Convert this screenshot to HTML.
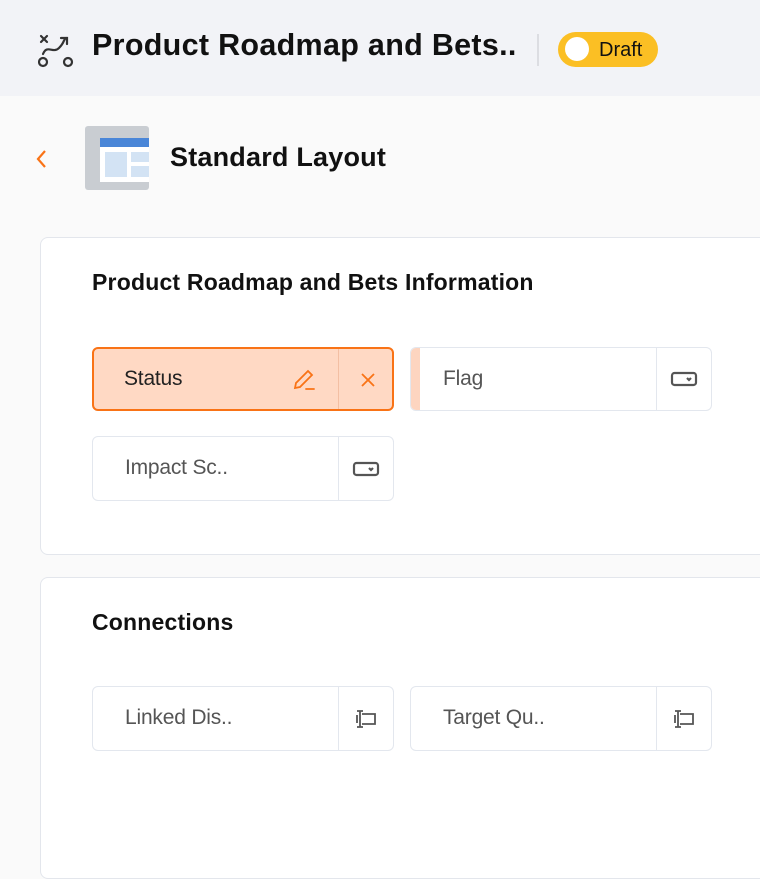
<!DOCTYPE html><html><head><style>
body{margin:0;width:760px;height:788px;overflow:hidden;background:#fafafa;font-family:"Liberation Sans",sans-serif;position:relative}
.hdr{position:absolute;left:0;top:0;width:760px;height:96px;background:#f2f3f7}
.abs{position:absolute}
.card{position:absolute;left:40px;width:740px;background:#fff;border:1px solid #e3e6ec;border-radius:8px}
.f{position:absolute;width:302px;height:64px;border:1px solid #e3e7ee;border-radius:6px;background:#fff;box-sizing:border-box;overflow:hidden}
.f .t{position:absolute;left:32px;top:0;line-height:61px;font-size:21px;color:#555;letter-spacing:-0.2px}
.f .d{position:absolute;left:245px;top:0;width:1px;height:100%;background:#e3e7ee}
.f .i{position:absolute;left:246px;top:0;width:54px;height:100%;display:flex;align-items:center;justify-content:center}
</style></head><body>
<div class="hdr"></div>
<svg class="abs" style="left:38px;top:34px" width="36" height="36" viewBox="0 0 36 36" fill="none" stroke="#333" stroke-width="2.2" stroke-linecap="round"><path d="M3 2l6 6M9 2l-6 6"/><path d="M5 20c4-10 10 0 16-6s4-8 7-10"/><path d="M23 4h6v6"/><circle cx="5" cy="28" r="4"/><circle cx="30" cy="28" r="4"/></svg>
<div class="abs" style="left:92px;top:28px;font-size:30.5px;font-weight:bold;color:#111;letter-spacing:0.3px">Product Roadmap and Bets..</div>
<div class="abs" style="left:537px;top:34px;width:2px;height:32px;background:#dcdde2"></div>
<div class="abs" style="left:558px;top:32px;width:100px;height:35px;border-radius:18px;background:#fbbf24"></div>
<div class="abs" style="left:565px;top:37px;width:24px;height:24px;border-radius:50%;background:#fff"></div>
<div class="abs" style="left:599px;top:38px;font-size:20px;color:#111;line-height:24px">Draft</div>
<svg class="abs" style="left:34px;top:149px" width="14" height="20" viewBox="0 0 14 20" fill="none" stroke="#f97316" stroke-width="2.2"><path d="M11 2L4 10l7 8"/></svg>
<div class="abs" style="left:85px;top:126px;width:64px;height:64px;background:#c9cdd2;border-radius:3px"></div>
<div class="abs" style="left:100px;top:138px;width:49px;height:44px;background:#fff"></div>
<div class="abs" style="left:100px;top:138px;width:49px;height:9px;background:#4a86d8"></div>
<div class="abs" style="left:105px;top:152px;width:22px;height:25px;background:#d3e3f4"></div>
<div class="abs" style="left:131px;top:152px;width:18px;height:10px;background:#d3e3f4"></div>
<div class="abs" style="left:131px;top:166px;width:18px;height:11px;background:#d3e3f4"></div>
<div class="abs" style="left:170px;top:142px;font-size:27px;font-weight:bold;color:#111;letter-spacing:0.2px">Standard Layout</div>

<div class="card" style="top:237px;height:316px"></div>
<div class="abs" style="left:92px;top:269px;font-size:23px;font-weight:bold;color:#111;letter-spacing:0.2px">Product Roadmap and Bets Information</div>
<div class="f" style="left:92px;top:347px;background:#ffd9c4;border:2px solid #f97316">
<div class="t" style="left:30px;color:#222;line-height:60px">Status</div>
<div class="d" style="left:244px;background:#f3bfa3"></div>
<svg class="abs" style="left:198px;top:19px" width="26" height="24" viewBox="0 0 26 24" fill="none" stroke="#f97316" stroke-width="1.8" stroke-linecap="round"><path d="M3 20l1-5L16 3l4 4L8 19z"/><path d="M14 21h8"/></svg>
<svg class="abs" style="left:266px;top:23px" width="16" height="16" viewBox="0 0 16 16" stroke="#f97316" stroke-width="1.8"><path d="M2 2l12 12M14 2L2 14"/></svg>
</div>
<div class="f" style="left:410px;top:347px">
<div class="abs" style="left:0;top:0;width:9px;height:100%;background:#fdd5c0"></div>
<div class="t">Flag</div><div class="d"></div>
<div class="i"><svg width="28" height="18" viewBox="0 0 28 18" fill="none" stroke="#555" stroke-width="2.2"><rect x="2" y="3" width="24" height="12" rx="2.5"/><path d="M17 8l2 2 2-2"/></svg></div></div>
<div class="f" style="left:92px;top:436px;height:65px">
<div class="t">Impact Sc..</div><div class="d"></div>
<div class="i"><svg width="28" height="18" viewBox="0 0 28 18" fill="none" stroke="#555" stroke-width="2.2"><rect x="2" y="3" width="24" height="12" rx="2.5"/><path d="M17 8l2 2 2-2"/></svg></div></div>

<div class="card" style="top:577px;height:300px"></div>
<div class="abs" style="left:92px;top:609px;font-size:23px;font-weight:bold;color:#111;letter-spacing:0.2px">Connections</div>
<div class="f" style="left:92px;top:686px;height:65px">
<div class="t">Linked Dis..</div><div class="d"></div>
<div class="i"><svg width="26" height="22" viewBox="0 0 26 22" fill="none" stroke="#555" stroke-width="1.8"><path d="M9 6h13v10H9"/><path d="M7 3v16M4 3h6M4 19h6"/><path d="M4 7v8"/></svg></div></div>
<div class="f" style="left:410px;top:686px;height:65px">
<div class="t">Target Qu..</div><div class="d"></div>
<div class="i"><svg width="26" height="22" viewBox="0 0 26 22" fill="none" stroke="#555" stroke-width="1.8"><path d="M9 6h13v10H9"/><path d="M7 3v16M4 3h6M4 19h6"/><path d="M4 7v8"/></svg></div></div>
</body></html>
